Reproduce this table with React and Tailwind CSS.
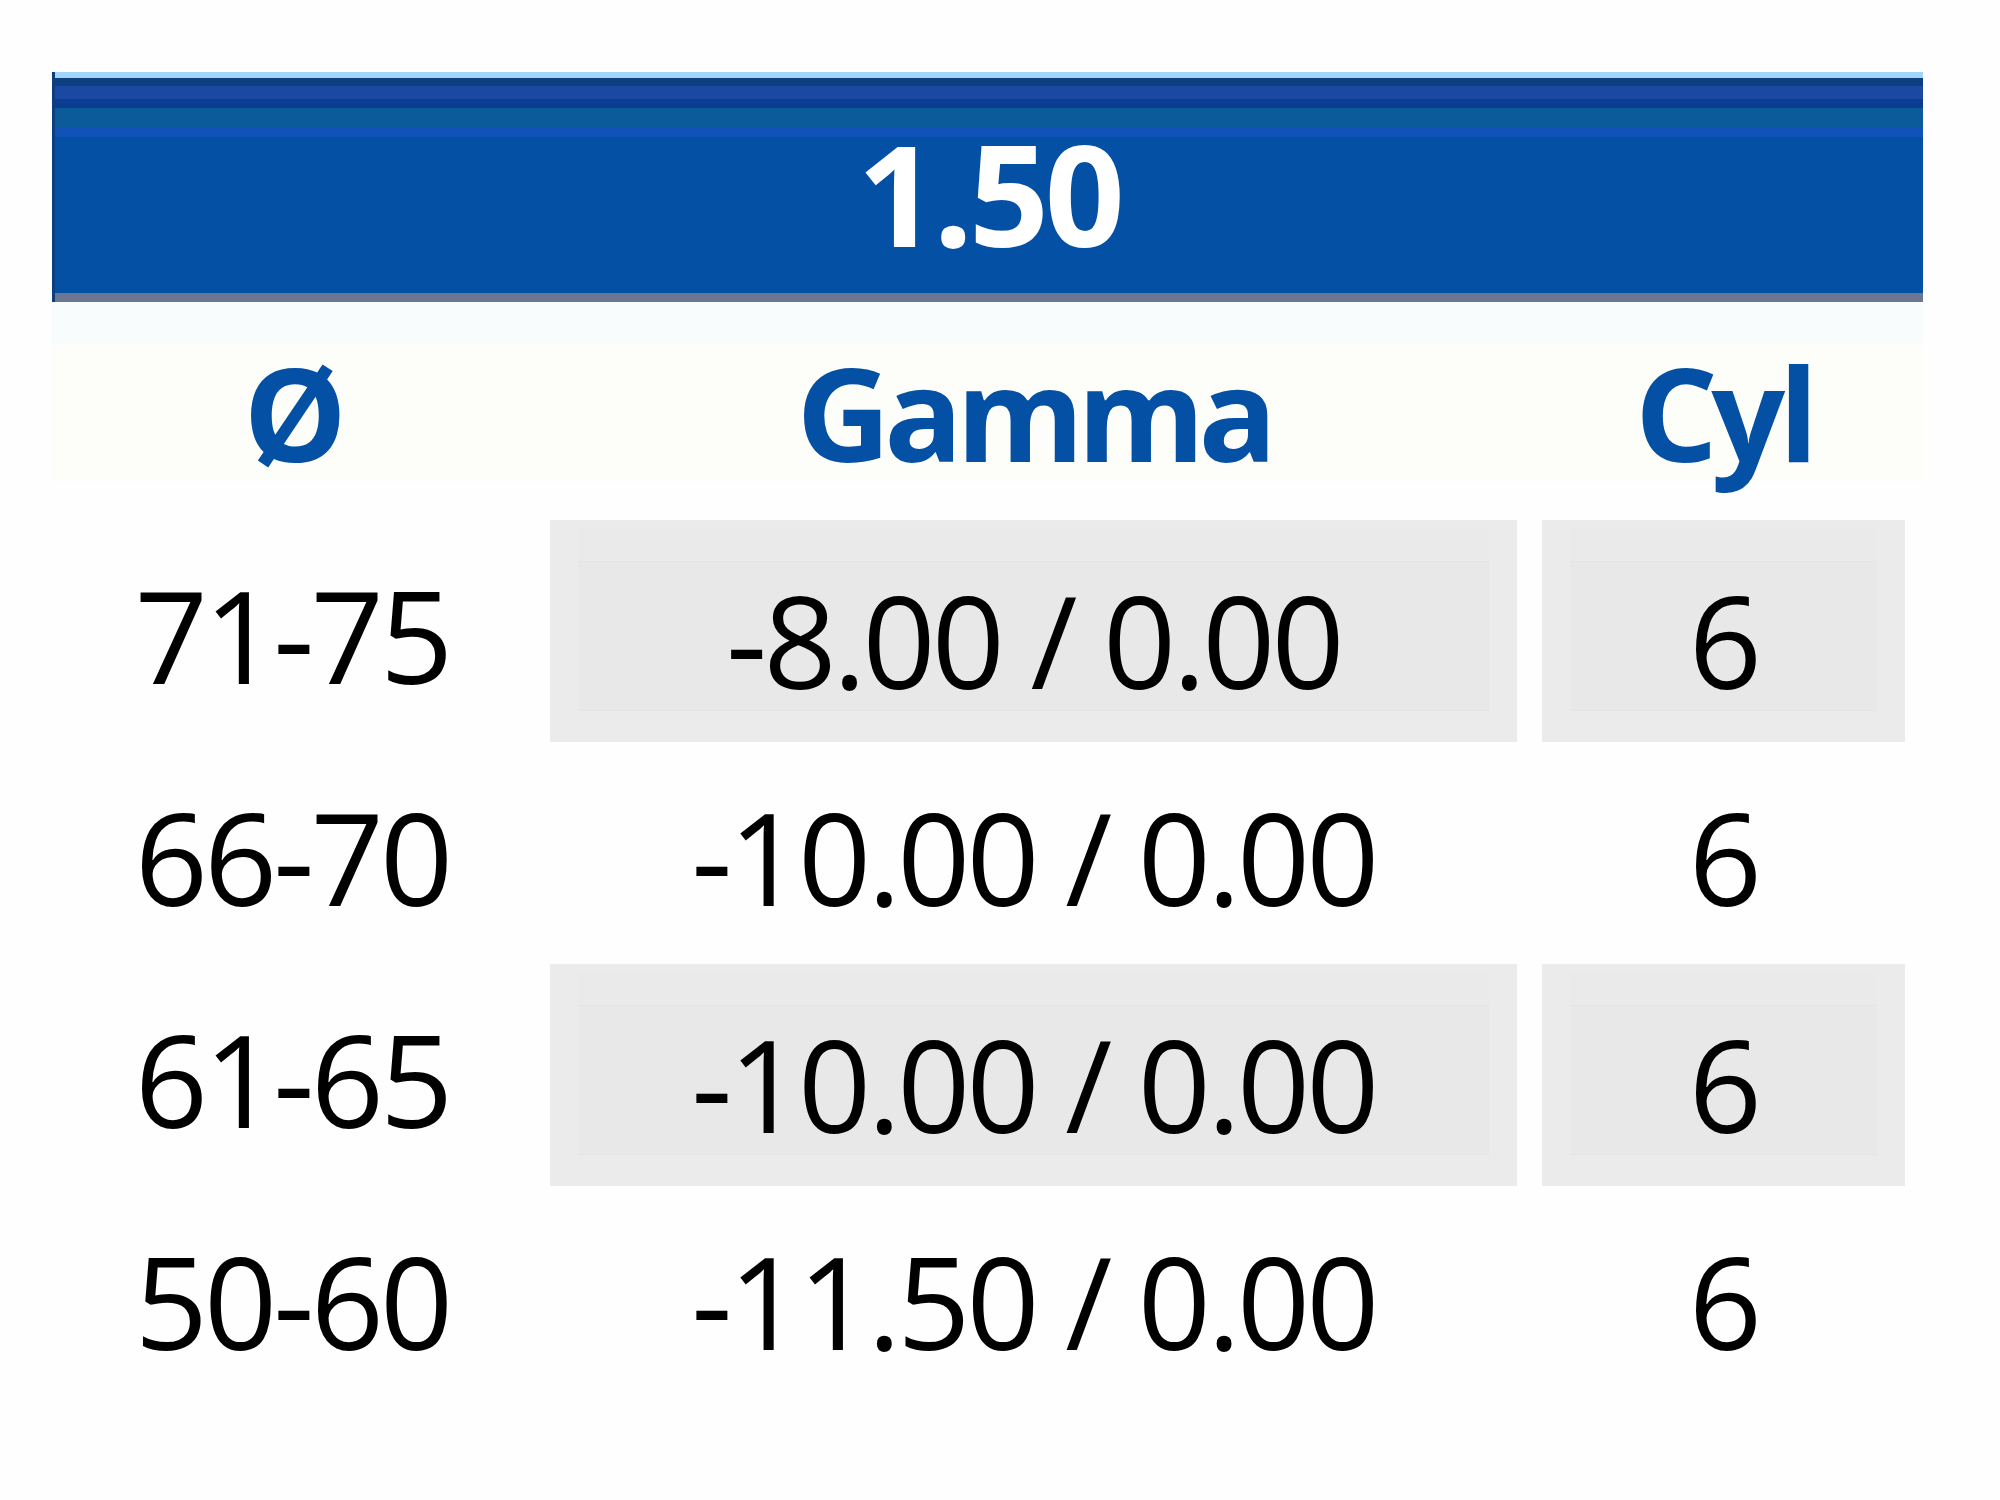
const ROWS = [
  { size: '71-75', gamma: '-8.00 / 0.00', cyl: '6', shaded: true },
  { size: '66-70', gamma: '-10.00 / 0.00', cyl: '6', shaded: false },
  { size: '61-65', gamma: '-10.00 / 0.00', cyl: '6', shaded: true },
  { size: '50-60', gamma: '-11.50 / 0.00', cyl: '6', shaded: false },
]

const FONT = "font-['Open_Sans','Noto_Sans',sans-serif]"

function Cell({ shaded, children }) {
  if (!shaded) {
    return <div className="flex h-full items-center justify-center pt-2">{children}</div>
  }
  return (
    <div className="flex h-full flex-col bg-[#ebebeb] px-[28px] py-[8px]">
      <div className="h-[34px] border-b border-[#e4e4e4] bg-[#eaeaea]" />
      <div className="flex flex-1 items-center justify-center bg-[#e8e8e8] pt-2">{children}</div>
      <div className="h-[24px] border-t border-[#e5e5e5] bg-[#ebebeb]" />
    </div>
  )
}

export default function App() {
  return (
    <div className={`min-h-[1500px] w-[2000px] bg-[#fefefe] pt-[72px] ${FONT}`}>
      <div className="ml-[52px] w-[1871px]">
        <div className="h-[230px] border-l-[3px] border-[#0d3f80] bg-[linear-gradient(to_bottom,#9fd6f5_6px,#0d3f80_6px,#0d3f80_14px,#1a48a2_14px,#1a48a2_27px,#0a3c92_27px,#0a3c92_36px,#0b5b9b_36px,#0b5b9b_56px,#1152b9_56px,#1152b9_65px,#0350a5_65px,#0350a5_221px,#6b7690_221px)] pt-[51px] text-center">
          <span className="text-[140px] font-bold leading-none tracking-[-0.03em] text-white">1.50</span>
        </div>

        <div className="grid h-[218px] grid-cols-[480px_967px_370px] gap-x-[18px] bg-[linear-gradient(to_bottom,#f8fcfd_0px,#f8fcfd_42px,#fdfdf9_42px,#fdfdf9_180px,#fefefe_180px)] pt-[45px] text-[130px] font-bold leading-none tracking-[-0.05em] text-[#0350a5]">
          <div className="text-center">Ø</div>
          <div className="text-center">Gamma</div>
          <div className="ml-[7px] text-center">Cyl</div>
        </div>

        {ROWS.map((row) => (
          <div
            key={row.size}
            className="grid h-[222px] grid-cols-[480px_967px_370px] gap-x-[18px] text-[128px] leading-none tracking-[-0.03em] text-black"
          >
            <div className="flex items-center justify-center pt-2">{row.size}</div>
            <Cell shaded={row.shaded}>{row.gamma}</Cell>
            <div className="ml-[7px] h-full">
              <Cell shaded={row.shaded}>{row.cyl}</Cell>
            </div>
          </div>
        ))}
      </div>
    </div>
  )
}
